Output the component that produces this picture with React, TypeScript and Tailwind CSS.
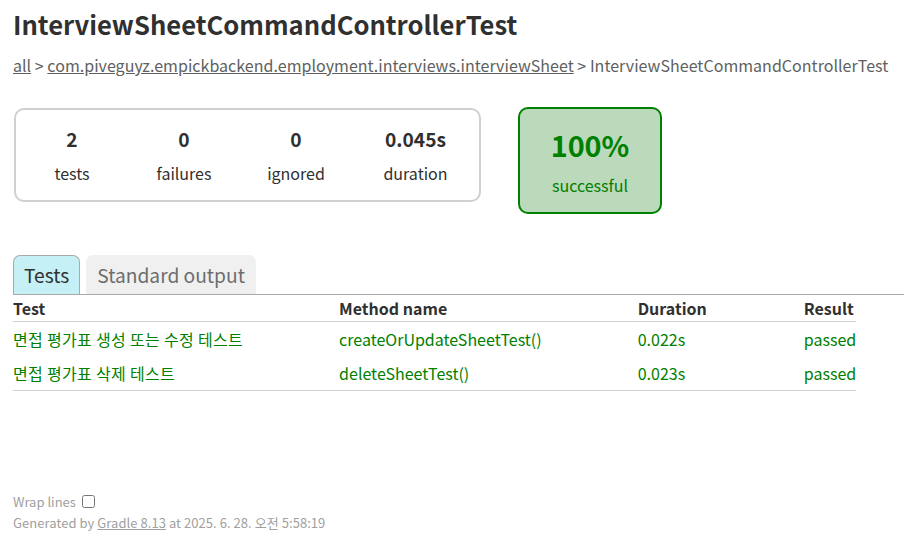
const stats = [
  { value: '2', label: 'tests', width: 'w-[112px]' },
  { value: '0', label: 'failures', width: 'w-[112px]' },
  { value: '0', label: 'ignored', width: 'w-[112px]' },
  { value: '0.045s', label: 'duration', width: 'w-[127px]' },
];

const tests = [
  { name: '면접 평가표 생성 또는 수정 테스트', method: 'createOrUpdateSheetTest()', duration: '0.022s', result: 'passed' },
  { name: '면접 평가표 삭제 테스트', method: 'deleteSheetTest()', duration: '0.023s', result: 'passed' },
];

export default function App() {
  return (
    <div className="min-h-screen bg-white pl-[13px] pt-[5px] font-['Noto_Sans_CJK_KR',sans-serif] text-[16px] leading-[normal] text-[#303030]">
      {/* Title */}
      <h1 className="whitespace-nowrap text-[25.6px] font-bold">InterviewSheetCommandControllerTest</h1>

      {/* Breadcrumbs */}
      <div className="mt-[11px] whitespace-nowrap tracking-[0.03px] text-[#606060]">
        <a className="underline">all</a> &gt;{' '}
        <a className="underline">com.piveguyz.empickbackend.employment.interviews.interviewSheet</a> &gt;{' '}
        InterviewSheetCommandControllerTest
      </div>

      {/* Summary */}
      <div className="mt-[30px] flex items-start">
        <div className="ml-px mt-px flex rounded-[10px] border-2 border-[#d0d0d0]">
          {stats.map((s) => (
            <div key={s.label} className={`${s.width} py-[15px] text-center`}>
              <p className="mb-2 text-[19.2px] font-bold">{s.value}</p>
              <p>{s.label}</p>
            </div>
          ))}
        </div>
        <div className="ml-[37px] w-[144px] rounded-[10px] border-2 border-[#008000] bg-[#bbd9bb] py-[15px] text-center text-[#008000]">
          <p className="mb-2 text-[28.8px] font-bold">100%</p>
          <p>successful</p>
        </div>
      </div>

      {/* Tabs */}
      <div className="mt-[41px] flex gap-[6px] border-b border-[#aaa]">
        <div className="rounded-t-[7px] border border-b-0 border-[#aaa] bg-[#c5f0f5] px-[10px] py-[5px] text-[19.2px]">
          Tests
        </div>
        <div className="rounded-t-[7px] border border-b-0 border-transparent bg-[#f0f0f0] px-[10px] py-[5px] text-[19.2px] text-[#6d6d6d]">
          Standard output
        </div>
      </div>

      {/* Tests table */}
      <table className="border-collapse border-b border-[#d0d0d0]">
        <thead>
          <tr>
            <th className="whitespace-nowrap border-b border-[#d0d0d0] p-px pl-0 text-left font-bold">Test</th>
            <th className="whitespace-nowrap border-b border-[#d0d0d0] p-px pl-24 text-left font-bold">Method name</th>
            <th className="whitespace-nowrap border-b border-[#d0d0d0] p-px pl-24 text-left font-bold">Duration</th>
            <th className="whitespace-nowrap border-b border-[#d0d0d0] p-px pl-24 text-left font-bold">Result</th>
          </tr>
        </thead>
        <tbody className="text-[#008000]">
          {tests.map((t) => (
            <tr key={t.method}>
              <td className="whitespace-nowrap py-[5px] pl-0 tracking-[0.32px]">{t.name}</td>
              <td className="whitespace-nowrap py-[5px] pl-24">{t.method}</td>
              <td className="whitespace-nowrap py-[5px] pl-24">{t.duration}</td>
              <td className="whitespace-nowrap py-[5px] pl-24">{t.result}</td>
            </tr>
          ))}
        </tbody>
      </table>

      {/* Footer */}
      <div className="mt-[100px] whitespace-nowrap text-[13px] text-[#a0a0a0]">
        <div className="-mt-px">
          <label className="align-middle">Wrap lines</label>
          <input type="checkbox" className="ml-[6px] align-middle" />
        </div>
        <div className="mt-[2px] tracking-[0.05px]">
          Generated by <a className="underline">Gradle 8.13</a> at 2025. 6. 28. 오전 5:58:19
        </div>
      </div>
    </div>
  );
}
